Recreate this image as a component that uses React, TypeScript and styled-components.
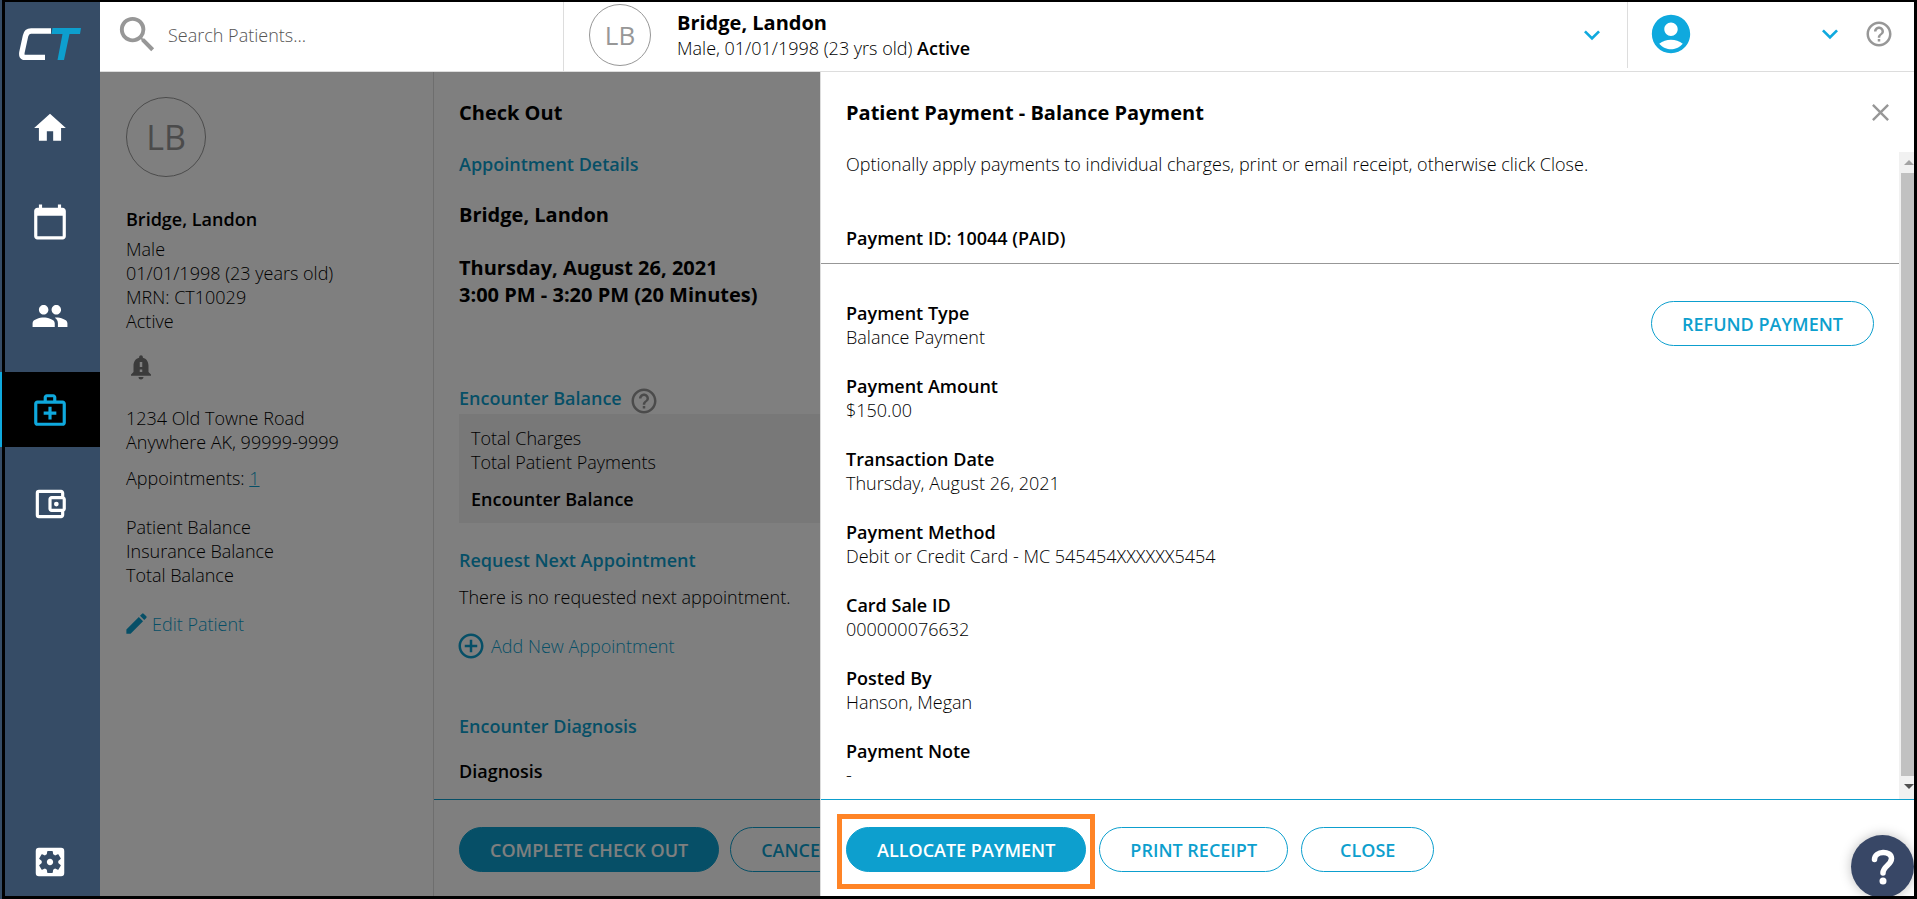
import React from 'react';
import styled, { createGlobalStyle, css } from 'styled-components';
import {
  MdAccountCircle,
  MdAddCircleOutline,
  MdCalendarToday,
  MdClose,
  MdEdit,
  MdExpandMore,
  MdHelpOutline,
  MdHome,
  MdNotificationImportant,
  MdOutlineAccountBalanceWallet,
  MdOutlineMedicalServices,
  MdPeople,
  MdSearch,
  MdSettingsApplications,
} from 'react-icons/md';

const color = {
  navy: '#364c66',
  cyan: '#0fa9de',
  blue: '#0d9fce',
  line: '#dddddd',
  grey: '#979797',
  orange: '#ff8426',
};

const GlobalStyle = createGlobalStyle`
  *, *::before, *::after { box-sizing: border-box; }
  body {
    margin: 0;
    overflow: hidden;
    font-family: "Open Sans", "Liberation Sans", sans-serif;
    font-size: 18px;
    font-weight: 300;
    line-height: 24px;
    color: #000;
  }
  h1, h2, h3, p, dl, dd, dt, ul { margin: 0; padding: 0; }
  button, input { font: inherit; }
  svg { display: block; flex: none; }
`;

const Page = styled.div`
  position: relative;
  display: flex;
  height: 100vh;
  overflow: hidden;
  background: #fff;
`;

const Frame = styled.div`
  position: absolute;
  inset: 0 0 0 2px;
  z-index: 5;
  border: 3px solid #000;
  border-top-width: 2px;
  pointer-events: none;
`;

/* ---------- sidebar ---------- */

const Sidebar = styled.nav`
  display: flex;
  flex: none;
  flex-direction: column;
  width: 100px;
  background: ${color.navy};
`;

const Logo = styled.a`
  display: block;
  height: 90px;
  padding: 28px 0 0 19px;
`;

const NavList = styled.div`
  display: flex;
  flex: 1;
  flex-direction: column;
  gap: 19px;
`;

const NavItem = styled.a<{ $active?: boolean; $last?: boolean }>`
  display: flex;
  align-items: center;
  justify-content: center;
  height: 75px;
  color: #fff;
  ${(p) => p.$active && css`
    border-left: 2px solid ${color.cyan};
    padding-right: 2px;
    background: #000;
    color: ${color.cyan};
  `}
  ${(p) => p.$last && css`margin-top: auto;`}
`;

/* ---------- top bar ---------- */

const Main = styled.div`
  display: flex;
  flex: 1;
  flex-direction: column;
  min-width: 0;
`;

const TopBar = styled.header`
  display: flex;
  flex: none;
  height: 72px;
  border-bottom: 1px solid ${color.line};
`;

const SearchBox = styled.label`
  display: flex;
  align-items: center;
  gap: 7px;
  width: 463px;
  padding: 0 0 2px 14px;
  color: ${color.grey};
`;

const SearchInput = styled.input`
  flex: 1;
  min-width: 0;
  height: 32px;
  border: 0;
  padding: 0;
  outline: 0;
  background: none;
  color: #333;
  &::placeholder { color: #555; opacity: 1; }
`;

const PatientMenu = styled.div`
  display: flex;
  flex: 1;
  align-items: center;
  border-left: 1px solid ${color.line};
  padding: 0 19px 2px 25px;
`;

const Avatar = styled.div<{ $large?: boolean }>`
  display: flex;
  flex: none;
  align-items: center;
  justify-content: center;
  width: ${(p) => (p.$large ? 80 : 62)}px;
  height: ${(p) => (p.$large ? 80 : 62)}px;
  border: 1px solid ${color.grey};
  border-radius: 50%;
  color: ${color.grey};
  font-size: ${(p) => (p.$large ? 34 : 26)}px;
  font-weight: 400;
`;

const PatientSummary = styled.div`
  flex: 1;
  padding: 0 0 0 26px;
`;

const Strong = styled.strong`
  font-weight: 600;
`;

const IconButton = styled.button`
  display: flex;
  align-items: center;
  border: 0;
  padding: 0;
  background: none;
  color: ${color.grey};
`;

const MenuButton = styled(IconButton)`
  color: ${color.cyan};
`;

const UserMenu = styled.div`
  display: flex;
  align-items: center;
  justify-content: space-between;
  width: 290px;
  height: 68px;
  border-left: 1px solid ${color.line};
  padding: 0 23px 0 20px;
`;

const UserActions = styled.div`
  display: flex;
  align-items: center;
  gap: 18px;
`;

/* ---------- page body ---------- */

const Body = styled.div`
  position: relative;
  display: flex;
  flex: 1;
  min-height: 0;
`;

const PatientPanel = styled.aside`
  display: flex;
  flex: none;
  flex-direction: column;
  width: 334px;
  border-right: 1px solid ${color.line};
  padding: 25px 26px;
`;

const PatientName = styled.h2`
  margin: 30px 0 6px;
  font-size: 18px;
  font-weight: 600;
  line-height: 24px;
`;

const AlertBadge = styled.div`
  margin: 19px 0 24px;
  color: #777;
`;

const Paragraph = styled.p<{ $top?: number }>`
  margin-top: ${(p) => p.$top ?? 0}px;
`;

const Link = styled.a`
  color: ${color.blue};
`;

const ActionLink = styled.a<{ $gap: number }>`
  display: flex;
  align-items: center;
  gap: ${(p) => p.$gap}px;
  color: ${color.blue};
  text-decoration: none;
`;

const EditLink = styled(ActionLink)`
  margin: 23px 0 0 -3px;
`;

const CheckOut = styled.section`
  display: flex;
  flex: 1;
  flex-direction: column;
  min-width: 0;
`;

const CheckOutBody = styled.div`
  flex: 1;
  min-height: 0;
  overflow: hidden;
  padding: 27px 25px 0;
`;

const Title = styled.h1`
  font-size: 20px;
  font-weight: 700;
  line-height: 27px;
`;

const SectionTitle = styled.h3<{ $top: number }>`
  display: flex;
  align-items: center;
  gap: 7px;
  margin-top: ${(p) => p.$top}px;
  color: ${color.blue};
  font-size: 18px;
  font-weight: 600;
  line-height: 24px;
`;

const HelpIcon = styled.span`
  height: 24px;
  color: ${color.grey};
`;

const Lead = styled.p<{ $top: number }>`
  margin-top: ${(p) => p.$top}px;
  font-size: 20px;
  font-weight: 700;
  line-height: 27px;
`;

const BalanceBox = styled.div`
  margin-top: 4px;
  padding: 12px;
  background: #f0f0f0;
`;

const BalanceTotal = styled.p`
  margin-top: 13px;
  font-weight: 600;
`;

const AddLink = styled(ActionLink)`
  margin: 22px 0 0 -3px;
  height: 30px;
`;

const Footer = styled.footer<{ $gap: number }>`
  display: flex;
  flex: none;
  align-items: flex-start;
  gap: ${(p) => p.$gap}px;
  height: 100px;
  border-top: 1px solid ${color.blue};
  padding: 27px 25px 0;
`;

const Pill = styled.button<{ $primary?: boolean }>`
  flex: none;
  height: 45px;
  border: 1px solid ${color.blue};
  border-radius: 23px;
  padding: 0 30px;
  background: ${(p) => (p.$primary ? color.blue : '#fff')};
  color: ${(p) => (p.$primary ? '#fff' : color.blue)};
  font-weight: 600;
  white-space: nowrap;
`;

const ClosePill = styled(Pill)`
  padding: 0 38px;
`;

/* ---------- payment drawer ---------- */

const Backdrop = styled.div`
  position: absolute;
  inset: 0;
  background: rgba(0, 0, 0, 0.5);
`;

const Drawer = styled.section`
  position: absolute;
  inset: 0 0 0 720px;
  display: flex;
  flex-direction: column;
  border-left: 1px solid ${color.line};
  background: #fff;
`;

const DrawerHeader = styled.div`
  display: flex;
  flex: none;
  align-items: center;
  justify-content: space-between;
  height: 80px;
  padding: 0 22px 0 25px;
`;

const DrawerScroll = styled.div`
  display: flex;
  flex: 1;
  min-height: 0;
`;

const DrawerContent = styled.div`
  flex: 1;
  overflow: hidden;
`;

const PaymentHeading = styled.h2`
  margin-top: 50px;
  border-bottom: 1px solid ${color.grey};
  padding: 0 25px 13px;
  font-size: 18px;
  font-weight: 600;
  line-height: 24px;
`;

const Intro = styled.p`
  padding: 0 25px;
`;

const PaymentDetails = styled.div`
  display: flex;
  align-items: flex-start;
  justify-content: space-between;
  padding: 37px 25px 0;
`;

const FieldList = styled.dl`
  display: flex;
  flex-direction: column;
  gap: 25px;
`;

const FieldLabel = styled.dt`
  font-weight: 600;
`;

const ScrollTrack = styled.div`
  display: flex;
  flex: none;
  flex-direction: column;
  align-items: center;
  justify-content: space-between;
  width: 18px;
  padding: 8px 0 9px 2px;
  background: #f1f1f1;
`;

const ScrollThumb = styled.div`
  flex: 1;
  align-self: stretch;
  margin: 7px 0 8px;
  background: #c1c1c1;
`;

const Highlight = styled.div`
  position: absolute;
  inset: -13px -9px -17px -9px;
  border: 5px solid ${color.orange};
  pointer-events: none;
`;

const Highlighted = styled.div`
  position: relative;
  flex: none;
`;

const HelpBubble = styled.button`
  position: absolute;
  right: 3px;
  bottom: 1px;
  z-index: 4;
  display: flex;
  align-items: center;
  justify-content: center;
  width: 63px;
  height: 63px;
  border: 0;
  border-radius: 50%;
  padding: 0;
  background: #384766;
  box-shadow: 0 0 12px rgba(0, 0, 0, 0.25);
`;

const navItems = [
  { label: 'Home', Icon: MdHome },
  { label: 'Calendar', Icon: MdCalendarToday },
  { label: 'Patients', Icon: MdPeople },
  { label: 'Encounters', Icon: MdOutlineMedicalServices, active: true },
  { label: 'Billing', Icon: MdOutlineAccountBalanceWallet },
];

const fields = [
  ['Payment Type', 'Balance Payment'],
  ['Payment Amount', '$150.00'],
  ['Transaction Date', 'Thursday, August 26, 2021'],
  ['Payment Method', 'Debit or Credit Card - MC 545454XXXXXX5454'],
  ['Card Sale ID', '000000076632'],
  ['Posted By', 'Hanson, Megan'],
  ['Payment Note', '-'],
];

function LogoMark() {
  return (
    <svg width="63" height="32" viewBox="0 0 63 32" fill="none" aria-hidden="true">
      <path d="M32 3H12Q7.500 3 6.500 8L3 24Q2 29.500 6 29.500H26" stroke="#fff" strokeWidth="5.500" />
      <path d="M33.500 0H62L61 6H50.500L45 32H38.500L43.500 6H32.500Z" fill={color.blue} />
    </svg>
  );
}

function Triangle({ down }: { down?: boolean }) {
  return (
    <svg width="10" height="6" viewBox="0 0 10 6" aria-hidden="true">
      {down ? <path d="M0 0H10L5 5Z" fill="#505050" /> : <path d="M0 5H10L5 0Z" fill="#a3a3a3" />}
    </svg>
  );
}

export default function App() {
  return (
    <>
      <GlobalStyle />
      <Page>
        <Sidebar>
          <Logo href="#" aria-label="CT">
            <LogoMark />
          </Logo>
          <NavList>
            {navItems.map(({ label, Icon, active }) => (
              <NavItem key={label} href="#" aria-label={label} $active={active}>
                <Icon size={38} />
              </NavItem>
            ))}
            <NavItem href="#" aria-label="Settings" $last>
              <MdSettingsApplications size={38} />
            </NavItem>
          </NavList>
        </Sidebar>

        <Main>
          <TopBar>
            <SearchBox>
              <MdSearch size={47} />
              <SearchInput type="text" placeholder="Search Patients..." aria-label="Search Patients" />
            </SearchBox>
            <PatientMenu>
              <Avatar>LB</Avatar>
              <PatientSummary>
                <Title as="h2">Bridge, Landon</Title>
                <p>
                  Male, 01/01/1998 (23 yrs old) <Strong>Active</Strong>
                </p>
              </PatientSummary>
              <MenuButton aria-label="Patient menu">
                <MdExpandMore size={32} />
              </MenuButton>
            </PatientMenu>
            <UserMenu>
              <MenuButton aria-label="Account">
                <MdAccountCircle size={46} />
              </MenuButton>
              <UserActions>
                <MenuButton aria-label="Account menu">
                  <MdExpandMore size={32} />
                </MenuButton>
                <IconButton aria-label="Help">
                  <MdHelpOutline size={30} />
                </IconButton>
              </UserActions>
            </UserMenu>
          </TopBar>

          <Body>
            <PatientPanel>
              <Avatar $large>LB</Avatar>
              <PatientName>Bridge, Landon</PatientName>
              <p>Male</p>
              <p>01/01/1998 (23 years old)</p>
              <p>MRN: CT10029</p>
              <p>Active</p>
              <AlertBadge>
                <MdNotificationImportant size={30} />
              </AlertBadge>
              <p>1234 Old Towne Road</p>
              <p>Anywhere AK, 99999-9999</p>
              <Paragraph $top={12}>
                Appointments: <Link href="#">1</Link>
              </Paragraph>
              <Paragraph $top={25}>Patient Balance</Paragraph>
              <p>Insurance Balance</p>
              <p>Total Balance</p>
              <EditLink href="#" $gap={2}>
                <MdEdit size={27} />
                Edit Patient
              </EditLink>
            </PatientPanel>

            <CheckOut>
              <CheckOutBody>
                <Title>Check Out</Title>
                <SectionTitle $top={26}>Appointment Details</SectionTitle>
                <Lead $top={25}>Bridge, Landon</Lead>
                <Lead $top={26}>
                  Thursday, August 26, 2021
                  <br />
                  3:00 PM - 3:20 PM (20 Minutes)
                </Lead>
                <SectionTitle $top={78}>
                  Encounter Balance
                  <HelpIcon>
                    <MdHelpOutline size={30} />
                  </HelpIcon>
                </SectionTitle>
                <BalanceBox>
                  <p>Total Charges</p>
                  <p>Total Patient Payments</p>
                  <BalanceTotal>Encounter Balance</BalanceTotal>
                </BalanceBox>
                <SectionTitle $top={25}>Request Next Appointment</SectionTitle>
                <Paragraph $top={13}>There is no requested next appointment.</Paragraph>
                <AddLink href="#" $gap={5}>
                  <MdAddCircleOutline size={30} />
                  Add New Appointment
                </AddLink>
                <SectionTitle $top={53}>Encounter Diagnosis</SectionTitle>
                <Paragraph $top={21}>
                  <Strong>Diagnosis</Strong>
                </Paragraph>
              </CheckOutBody>
              <Footer $gap={11}>
                <Pill $primary>COMPLETE CHECK OUT</Pill>
                <Pill>CANCEL</Pill>
              </Footer>
            </CheckOut>

            <Backdrop />

            <Drawer role="dialog" aria-labelledby="drawer-title">
              <DrawerHeader>
                <Title as="h2" id="drawer-title">
                  Patient Payment - Balance Payment
                </Title>
                <IconButton aria-label="Close">
                  <MdClose size={29} />
                </IconButton>
              </DrawerHeader>
              <DrawerScroll>
                <DrawerContent>
                  <Intro>
                    Optionally apply payments to individual charges, print or email receipt, otherwise click Close.
                  </Intro>
                  <PaymentHeading>Payment ID: 10044 (PAID)</PaymentHeading>
                  <PaymentDetails>
                    <FieldList>
                      {fields.map(([label, value]) => (
                        <div key={label}>
                          <FieldLabel>{label}</FieldLabel>
                          <dd>{value}</dd>
                        </div>
                      ))}
                    </FieldList>
                    <Pill>REFUND PAYMENT</Pill>
                  </PaymentDetails>
                </DrawerContent>
                <ScrollTrack aria-hidden="true">
                  <Triangle />
                  <ScrollThumb />
                  <Triangle down />
                </ScrollTrack>
              </DrawerScroll>
              <Footer $gap={13}>
                <Highlighted>
                  <Pill $primary>ALLOCATE PAYMENT</Pill>
                  <Highlight />
                </Highlighted>
                <Pill>PRINT RECEIPT</Pill>
                <ClosePill>CLOSE</ClosePill>
              </Footer>
            </Drawer>
          </Body>
        </Main>

        <HelpBubble aria-label="Open help">
          <svg width="26" height="36" viewBox="0 0 26 36" fill="none" stroke="#fff" strokeLinecap="round" aria-hidden="true">
            <path d="M4.500 10.500C4.500 1.500 21.500 1 21.500 9.500C21.500 16 13 17 13 24" strokeWidth="5.500" />
            <path d="M13 32H13.010" strokeWidth="7" />
          </svg>
        </HelpBubble>
        <Frame />
      </Page>
    </>
  );
}
